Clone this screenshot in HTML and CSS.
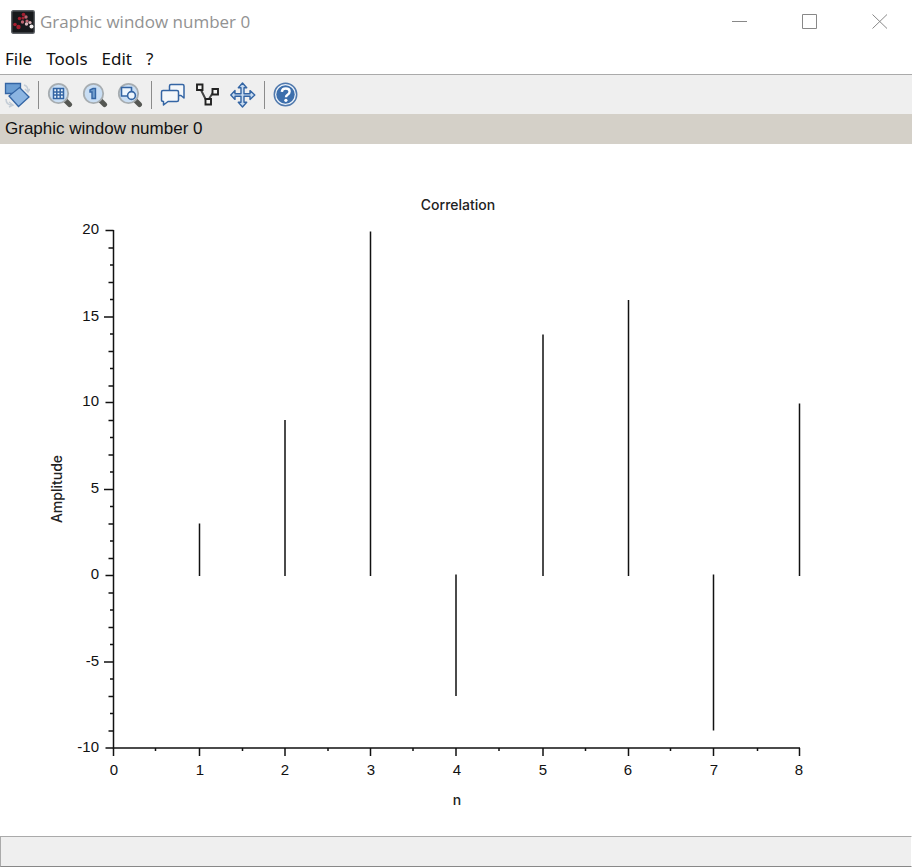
FILE: index.html
```html
<!DOCTYPE html>
<html lang="en">
<head>
<meta charset="utf-8">
<title>Graphic window number 0</title>
<link rel="stylesheet" href="styles.css">
</head>
<body>
<header class="titlebar">
  <svg class="app-icon" viewBox="0 0 24 24" aria-hidden="true">
    <rect x=".7" y=".7" width="22.6" height="22.6" rx="1.5" fill="#17191c" stroke="#5c6065" stroke-width="1.4"/>
    <g fill="#a51f30"><circle cx="12.500" cy="4.500" r="1.800"/><circle cx="8.500" cy="8.500" r="1.700"/><circle cx="4" cy="14.500" r="1.800"/><circle cx="7.500" cy="17" r="2.200"/><circle cx="12" cy="8" r="1.600"/></g>
    <g fill="#bd6672"><circle cx="15" cy="7" r="1.700"/><circle cx="11.500" cy="12" r="1.700"/><circle cx="16" cy="11" r="1.600"/></g>
    <g fill="#dcb6bb"><circle cx="15.500" cy="14" r="1.700"/><circle cx="19" cy="12.500" r="1.600"/></g>
    <circle cx="20.500" cy="16.500" r="2" fill="#f3efef"/>
  </svg>
  <h1 class="window-title">Graphic window number 0</h1>
  <div class="window-controls">
    <button class="control" aria-label="Minimize"><svg viewBox="0 0 16 16"><path d="M0 7.500h15"/></svg></button>
    <button class="control" aria-label="Maximize"><svg viewBox="0 0 16 16"><path d="M.5 .5h14v14h-14z"/></svg></button>
    <button class="control" aria-label="Close"><svg viewBox="0 0 16 16"><path d="M.5 .5l14.500 14M15 .5L.5 14.500"/></svg></button>
  </div>
</header>
<nav class="menubar">
  <button>File</button><button>Tools</button><button>Edit</button><button>?</button>
</nav>
<div class="toolbar" role="toolbar" aria-label="Figure tools">
  <div class="tool-group">
    <button class="tool" aria-label="Rotate"><svg viewBox="0 0 26 26">
      <path d="M20 3q4 1 4 6m-3-2l3 3 2-3M2 17q0 6 6 6m-3-3l4 3-4 2" fill="none" stroke="#c3ccd6" stroke-width="1.500"/>
      <path d="M1.500 1.500h15v10h-15z" fill="#6c9ed3" stroke="#3465a4" stroke-width="1.300"/><path d="M15.500 5.500L25 15 14.500 24.500 5 14z" fill="#8cb5e2" stroke="#3465a4" stroke-width="1.300"/>
    </svg></button>
  </div>
  <span class="separator"></span>
  <div class="tool-group">
    <button class="tool" aria-label="Zoom to area"><svg viewBox="0 0 26 26">
      <path d="M18.500 18.500l4 4" stroke="#555753" stroke-width="5" stroke-linecap="round"/><circle cx="11.500" cy="11.500" r="9.700" fill="#c9def4" stroke="#a7adb1" stroke-width="1.800"/>
      <path d="M6.500 6.500h10v10h-10zM9.800 6v11M13.200 6v11M6 10h11M6 13h11" fill="#e7f1fb" stroke="#3465a4" stroke-width="1.500"/>
    </svg></button>
    <button class="tool" aria-label="Original view"><svg viewBox="0 0 26 26">
      <path d="M18.500 18.500l4 4" stroke="#555753" stroke-width="5" stroke-linecap="round"/><circle cx="11.500" cy="11.500" r="9.700" fill="#c9def4" stroke="#a7adb1" stroke-width="1.800"/>
      <path d="M8 8l3-1.500h2.500v10H10V10H8z" fill="#729fcf" stroke="#3465a4" stroke-width="1.400"/>
    </svg></button>
    <button class="tool" aria-label="Zoom on shape"><svg viewBox="0 0 26 26">
      <path d="M18.500 18.500l4 4" stroke="#555753" stroke-width="5" stroke-linecap="round"/><circle cx="11.500" cy="11.500" r="9.700" fill="#c9def4" stroke="#a7adb1" stroke-width="1.800"/>
      <path d="M4.500 5.500h10v8.500h-10z" fill="#edf5fd" stroke="#3465a4" stroke-width="1.600"/><circle cx="14.500" cy="13.500" r="3.900" fill="#edf5fd" stroke="#3465a4" stroke-width="1.600"/>
    </svg></button>
  </div>
  <span class="separator"></span>
  <div class="tool-group">
    <button class="tool" aria-label="Data tips"><svg viewBox="0 0 26 26">
      <g fill="#f4f7fa" stroke="#3465a4" stroke-width="1.500" stroke-linejoin="round"><path d="M11 2.500h11.500q1.500 0 1.500 1.500v12l-3-2.500H11q-1.500 0-1.500-1.500V4q0-1.500 1.500-1.500z"/><path d="M3 8.500h14q1.500 0 1.500 1.500v8q0 1.500-1.500 1.500H8L3.500 23v-3.500q-2 0-2-1.500v-8q0-1.500 1.500-1.500z"/></g>
    </svg></button>
    <button class="tool" aria-label="Edit curve data"><svg viewBox="0 0 26 26">
      <path d="M5 6l7 14 7-11" fill="none" stroke="#444" stroke-width="2"/><g fill="#f4f4f3" stroke="#222" stroke-width="1.900"><path d="M2 2.500h5.500V8H2zM17.500 7H23v5.500h-5.500zM10.500 17H16v5.500h-5.500z"/></g>
    </svg></button>
    <button class="tool" aria-label="Move"><svg viewBox="0 0 26 26">
      <path d="M12.500 1l4.200 4.800H14v6h6V8.600l4.800 4.400-4.800 4.400v-3.200h-6v6h2.700L12.500 25l-4.200-4.800H11v-6H5v3.200L.8 13 5 8.600v3.200h6v-6H8.300z" fill="#c9dcf1" stroke="#3465a4" stroke-width="1.400" stroke-linejoin="round"/>
    </svg></button>
  </div>
  <span class="separator"></span>
  <div class="tool-group">
    <button class="tool" aria-label="Help"><svg viewBox="0 0 26 26">
      <circle cx="12.500" cy="12.500" r="11.200" fill="#edf3fa" stroke="#5079ad" stroke-width="1.500"/><circle cx="12.500" cy="12.500" r="9.200" fill="#3d6fac"/>
      <path d="M8.800 9.800q.4-3.300 4-3.300 3.800 0 3.800 3 0 2-2 3.200-1.600 1-1.600 2.600" fill="none" stroke="#fff" stroke-width="2.400"/><circle cx="12.900" cy="18.300" r="1.600" fill="#fff"/>
    </svg></button>
  </div>
</div>
<div class="infobar">Graphic window number 0</div>
<main class="figure">
  <svg class="chart" viewBox="0 0 912 692" role="img" aria-label="Correlation: amplitude against n">
    <text class="label middle" x="458" y="66">Correlation</text>
    <g class="line">
      <path d="M113.500 86v518.500M113 604h687"/>
      <path d="M105.500 86.500h8M104 173h9M105.500 258.500h8M104 345.500h9M105.500 431.500h8M104 518h9M105.500 604h8"/>
      <path d="M108.500 104h5M108.500 138.500h5M108.500 207.500h5M108.500 242h5M108.500 276.500h5M108.500 311h5M108.500 380h5M108.500 414.500h5M108.500 449h5M108.500 483.500h5M108.500 552.500h5M108.500 587h5"/>
      <path d="M110 121h4M110 155.500h4M110 190h4M110 224.500h4M110 293.500h4M110 328h4M110 362.500h4M110 397h4M110 466h4M110 500.500h4M110 535h4M110 569.500h4"/>
      <path d="M113.500 604v8M199.500 604v8M285 604v8M370.500 604v8M456 604v8M543 604v8M628.500 604v8M713.500 604v8M799.500 604v8"/>
      <path d="M155.500 604v3M242.500 604v3M328 604v3M413 604v3M499 604v3M585.500 604v3M670.500 604v3M757.500 604v3"/>
      <path d="M199.500 379.500V432M285 276V432M370.500 87.500V432M456 430.500V552M543 190.500V432M628.500 156V432M713.500 430.500V586.500M799.500 259.500V432"/>
    </g>
    <g class="number end">
      <text x="99" y="90">20</text><text x="99" y="177">15</text><text x="99" y="262">10</text><text x="99" y="349">5</text><text x="99" y="435">0</text><text x="99" y="522">-5</text><text x="99" y="608">-10</text>
    </g>
    <g class="number middle">
      <text x="114" y="631">0</text><text x="200" y="631">1</text><text x="285" y="631">2</text><text x="371" y="631">3</text><text x="457" y="631">4</text><text x="543" y="631">5</text><text x="628" y="631">6</text><text x="714" y="631">7</text><text x="799" y="631">8</text>
    </g>
    <text class="label middle" x="457" y="661">n</text>
    <text class="label middle" transform="translate(62 345) rotate(-90)">Amplitude</text>
  </svg>
</main>
<footer class="statusbar"></footer>
</body>
</html>
```
FILE: styles.css
```css
* { box-sizing: border-box; }
body {
  margin: 0;
  min-height: 100vh;
  display: flex;
  flex-direction: column;
  background: #fff;
  color: #111;
  font-family: "Liberation Sans", Arial, sans-serif;
}
button {
  border: 0;
  padding: 0;
  background: none;
  color: inherit;
  font: inherit;
}
button svg { display: block; }
.titlebar {
  display: flex;
  align-items: center;
  height: 44px;
  padding-left: 11px;
}
.app-icon { width: 24px; height: 24px; margin-right: 5px; }
.window-title {
  margin: 0;
  flex: 1;
  color: #929292;
  font: 400 17px/24px "Open Sans", sans-serif;
}
.window-controls { display: flex; margin-right: -3px; }
.control {
  display: flex;
  justify-content: center;
  align-items: center;
  width: 70px;
  height: 44px;
}
.control svg {
  width: 16px;
  height: 16px;
  fill: none;
  stroke: #888;
}
.menubar {
  display: flex;
  gap: 14px;
  height: 30px;
  padding: 0 5px;
  font: 17px/30px "Noto Sans", sans-serif;
}
.toolbar {
  display: flex;
  align-items: center;
  gap: 8px;
  height: 40px;
  padding-left: 4px;
  border-top: 1px solid #aaa;
  background: #efefef;
}
.tool-group { display: flex; gap: 9px; }
.tool, .tool svg { width: 26px; height: 26px; }
.separator { width: 1px; height: 28px; background: #8b8b8b; }
.infobar {
  height: 30px;
  padding: 0 5px;
  background: #d4d0c8;
  font-size: 17px;
  line-height: 30px;
}
.figure { flex: 1; }
.chart { display: block; width: 100%; height: auto; }
.line { fill: none; stroke: #111; stroke-width: 1.5; }
.number { font-size: 15px; fill: #111; }
.label { font: 500 14px Inter, sans-serif; fill: #222; }
.middle { text-anchor: middle; }
.end { text-anchor: end; }
.statusbar {
  height: 31px;
  border: 1px solid #aaa;
  border-bottom-color: #888;
  border-right-color: #fff;
  background: #efefef;
}
```
